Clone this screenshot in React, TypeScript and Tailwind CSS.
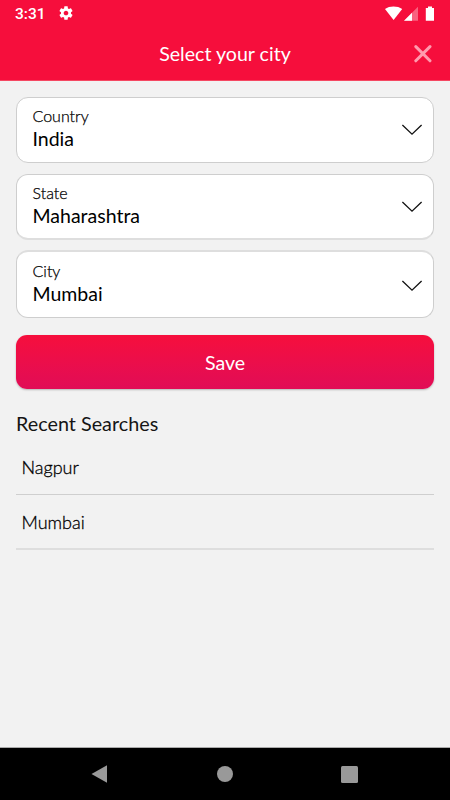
import React from "react";

function Chevron() {
  return (
    <svg width="22" height="14" viewBox="0 0 22 14" fill="none" className="shrink-0">
      <path d="M1.4 2 L11 11.2 L20.6 2" stroke="#111" strokeWidth="1.3" />
    </svg>
  );
}

function Field({ label, value, className }: { label: string; value: string; className: string }) {
  return (
    <button
      className={`flex w-full shrink-0 justify-between rounded-[12px] border border-[#cecece] bg-white pl-[15.5px] pr-[10px] text-left ${className}`}
    >
      <span className="flex flex-col">
        <span className="text-[16px] font-light leading-[20px] text-black [-webkit-text-stroke:0.25px_black]">{label}</span>
        <span className="mt-px text-[19.5px] leading-[24px] text-black">{value}</span>
      </span>
      <Chevron />
    </button>
  );
}

export default function App() {
  return (
    <div className="flex h-[800px] w-[450px] flex-col overflow-hidden bg-[#f2f2f2] font-['Lato',sans-serif]">
      <header className="h-[81px] shrink-0 border-b border-[#f54862] bg-[#f60e3c] text-white">
        <div className="flex h-[28px] items-center justify-between px-[15px]">
          <div className="flex items-center gap-[12px]">
            <span className="font-['Roboto',sans-serif] text-[15.5px] font-medium leading-[28px]">3:31</span>
            <svg width="16" height="16" viewBox="0 0 24 24" fill="white" className="-mt-[2px]">
              <path d="M19.43 12.98c.04-.32.07-.64.07-.98s-.03-.66-.07-.98l2.11-1.65c.19-.15.24-.42.12-.64l-2-3.46c-.12-.22-.39-.3-.61-.22l-2.49 1c-.52-.4-1.08-.73-1.69-.98l-.38-2.65C14.46 2.18 14.25 2 14 2h-4c-.25 0-.46.18-.49.42l-.38 2.65c-.61.25-1.17.59-1.69.98l-2.49-1c-.23-.09-.49 0-.61.22l-2 3.46c-.13.22-.07.49.12.64l2.11 1.65c-.04.32-.07.65-.07.98s.03.66.07.98l-2.11 1.65c-.19.15-.24.42-.12.64l2 3.46c.12.22.39.3.61.22l2.49-1c.52.4 1.08.73 1.69.98l.38 2.65c.03.24.24.42.49.42h4c.25 0 .46-.18.49-.42l.38-2.65c.61-.25 1.17-.59 1.69-.98l2.49 1c.23.09.49 0 .61-.22l2-3.46c.12-.22.07-.49-.12-.64l-2.11-1.65zM12 15.5c-1.93 0-3.5-1.57-3.5-3.5s1.57-3.5 3.5-3.5 3.5 1.57 3.5 3.5-1.57 3.5-3.5 3.5z" />
            </svg>
          </div>
          <svg width="50" height="16" viewBox="385 5.3 50 16" fill="white">
            <path d="M385 8.3 C389.5 5 397.5 5 402.2 8.3 L393.6 19.3 Z" />
            <path d="M418 6 V20 H404 Z" fillOpacity="0.35" />
            <path d="M412 12 V20 H404 Z" />
            <path d="M425.8 7.4 H428 V5.8 H432 V7.4 H434 V20 H425.8 Z" />
          </svg>
        </div>
        <div className="grid h-[52px] grid-cols-[1fr_auto_1fr] items-center">
          <h1 className="col-start-2 text-[19.6px] leading-[24px]">Select your city</h1>
          <svg width="18" height="18" viewBox="0 0 18 18" fill="none" className="mr-[18px] justify-self-end">
            <path d="M1.8 1.6 L16 15.8 M16 1.6 L1.8 15.8" stroke="#ff9aae" strokeWidth="3" strokeLinecap="round" />
          </svg>
        </div>
      </header>

      <main className="flex flex-1 flex-col px-4 pt-4">
        <Field label="Country" value="India" className="h-[66px] pt-[8px] [&>svg]:mt-[17px]" />
        <Field label="State" value="Maharashtra" className="mt-[11px] h-[66px] border-b-2 border-b-[#dedede] pt-[8px] [&>svg]:mt-[16.5px]" />
        <Field label="City" value="Mumbai" className="mt-[10px] h-[68px] border-t-2 border-t-[#dedede] pt-[9px] [&>svg]:mt-[18px]" />
        <button className="mt-[17px] h-[54px] shrink-0 rounded-[11px] bg-linear-to-b from-[#f60e3c] to-[#e10c56] pt-[2px] text-[19.6px] leading-[24px] text-white shadow-[0_1px_2px_rgba(0,0,0,0.25)]">
          Save
        </button>
        <h2 className="mt-[22px] text-[19.8px] leading-[24px] text-[#151515]">Recent Searches</h2>
        <ul className="text-[18px] font-light leading-[24px] text-black [-webkit-text-stroke:0.3px_black]">
          <li className="h-[60px] border-b border-[#cfcfcf] pl-[5.5px] pt-[20px]">Nagpur</li>
          <li className="h-[55px] border-b-2 border-[#dedede] pl-[5.5px] pt-[15px]">Mumbai</li>
        </ul>
      </main>

      <nav className="grid h-[53px] shrink-0 grid-cols-[198px_53px_197px] items-center justify-items-center border-t border-[#aaa] bg-black">
        <svg width="17" height="18" viewBox="0 0 17 18" fill="#999">
          <path d="M.5 9 L16 .2 V17.8 Z" />
        </svg>
        <span className="h-4 w-4 rounded-full bg-[#999]" />
        <span className="h-[17px] w-[17px] rounded-[1.5px] bg-[#999]" />
      </nav>
    </div>
  );
}
